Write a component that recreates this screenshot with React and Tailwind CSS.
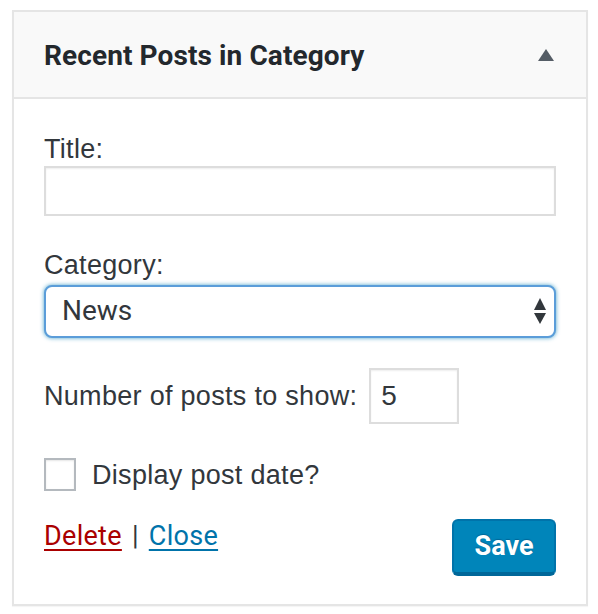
export default function App() {
  return (
    <div className="min-h-[614px] w-[598px] bg-white pt-[10px] pl-[12px]">
      <div className="w-[576px] border-2 border-[#e5e5e5] bg-white shadow-[0_1px_1px_rgba(0,0,0,0.04)]">
        {/* Widget header */}
        <div className="flex h-[87px] items-center justify-between border-b-2 border-[#e5e5e5] bg-[#f9f9f9] pl-[30px] pr-[32px]">
          <h3 className="pt-[2px] font-['Roboto',sans-serif] text-[28px] font-bold tracking-[0.1px] text-[#23282d]">Recent Posts in Category</h3>
          <svg width="16" height="12" viewBox="0 0 16 12">
            <path d="M8 0 L16 12 L0 12 Z" fill="#555d66" />
          </svg>
        </div>

        {/* Widget form */}
        <div className="px-[30px] pt-[35px] pb-[28px] font-['Liberation_Sans',sans-serif] text-[27px] tracking-[0.3px] text-[#32373c]">
          <label className="block leading-[30px]">Title:</label>
          <input type="text" className="mt-[2px] block h-[50px] w-[512px] border-2 border-[#dddddd] bg-white px-3 shadow-[inset_0_1px_2px_rgba(0,0,0,0.07)] outline-none" />

          <label className="mt-[34px] block leading-[30px]">Category:</label>
          <div className="relative mt-[5px] h-[53px] w-[512px] rounded-[8px] border-2 border-[#5b9dd9] bg-white shadow-[0_0_4px_rgba(30,140,190,0.8)]">
            <span className="absolute left-[16px] top-[9px] font-['Roboto',sans-serif] text-[28px] leading-[30px] tracking-normal text-[#32373c]">News</span>
            <svg width="12" height="26" viewBox="0 0 12 26" className="absolute right-[8px] top-[11px]">
              <path d="M6 0 L12 12 L0 12 Z" fill="#32373c" />
              <path d="M0 15 L12 15 L6 26 Z" fill="#32373c" />
            </svg>
          </div>

          <div className="mt-[30px] flex items-center">
            <span className="leading-[30px]">Number of posts to show:</span>
            <div className="ml-[12px] flex h-[56px] w-[90px] items-center border-2 border-[#dddddd] bg-white pl-[10px] shadow-[inset_0_1px_2px_rgba(0,0,0,0.07)]">
              <span className="text-[28px] text-[#32373c]">5</span>
            </div>
          </div>

          <div className="mt-[34px] flex items-center">
            <span className="h-[33px] w-[32px] border-2 border-[#b4b9be] bg-white shadow-[inset_0_1px_2px_rgba(0,0,0,0.1)]" />
            <span className="ml-[16px] leading-[30px]">Display post date?</span>
          </div>

          <div className="mt-[28px] flex items-start justify-between">
            <div className="mt-[2px] font-['Roboto',sans-serif] text-[27px] leading-[30px] tracking-[0.3px]">
              <a className="text-[#a00] underline decoration-2 underline-offset-[4px]">Delete</a>
              <span className="px-[10px] text-[#32373c]">|</span>
              <a className="text-[#0073aa] underline decoration-2 underline-offset-[4px]">Close</a>
            </div>
            <button className="h-[57px] w-[104px] rounded-[6px] border-2 border-b-[4px] border-[#0073aa] border-b-[#006799] bg-[#0085ba] font-['Roboto',sans-serif] text-[27px] font-bold tracking-normal text-white [text-shadow:0_-1px_1px_#006799]">
              Save
            </button>
          </div>
        </div>
      </div>
    </div>
  );
}
